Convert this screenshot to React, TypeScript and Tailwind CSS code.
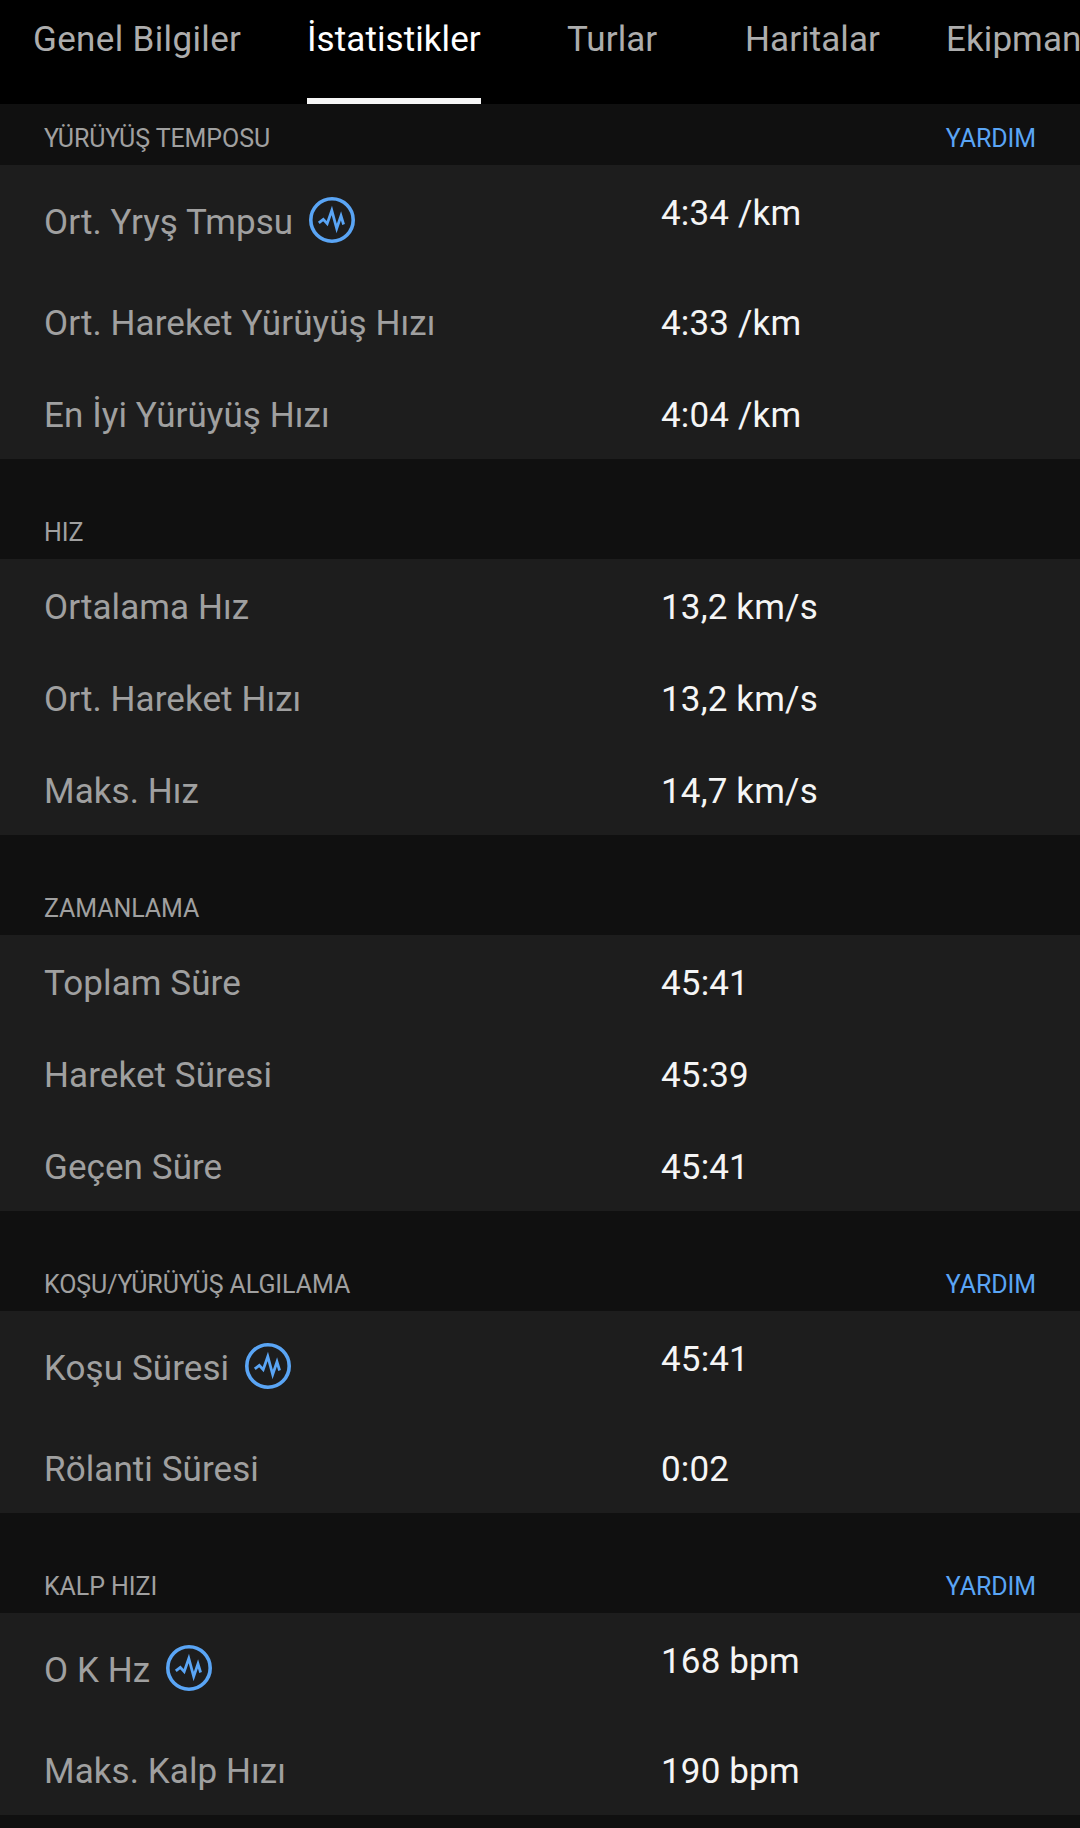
type Row = { label: string; value: string; graph?: boolean };
type Section = { title: string; help?: boolean; rows: Row[] };

const tabs = [
  { label: 'Genel Bilgiler', className: 'w-[208px] ml-[33px] tracking-[0.35px]' },
  { label: 'İstatistikler', className: 'w-[174px] ml-[66px]', active: true },
  { label: 'Turlar', className: 'w-[90px] ml-[86px]' },
  { label: 'Haritalar', className: 'w-[135px] ml-[88px]' },
  { label: 'Ekipman', className: 'ml-[66px]' },
];

const sections: Section[] = [
  {
    title: 'YÜRÜYÜŞ TEMPOSU',
    help: true,
    rows: [
      { label: 'Ort. Yryş Tmpsu', value: '4:34 /km', graph: true },
      { label: 'Ort. Hareket Yürüyüş Hızı', value: '4:33 /km' },
      { label: 'En İyi Yürüyüş Hızı', value: '4:04 /km' },
    ],
  },
  {
    title: 'HIZ',
    rows: [
      { label: 'Ortalama Hız', value: '13,2 km/s' },
      { label: 'Ort. Hareket Hızı', value: '13,2 km/s' },
      { label: 'Maks. Hız', value: '14,7 km/s' },
    ],
  },
  {
    title: 'ZAMANLAMA',
    rows: [
      { label: 'Toplam Süre', value: '45:41' },
      { label: 'Hareket Süresi', value: '45:39' },
      { label: 'Geçen Süre', value: '45:41' },
    ],
  },
  {
    title: 'KOŞU/YÜRÜYÜŞ ALGILAMA',
    help: true,
    rows: [
      { label: 'Koşu Süresi', value: '45:41', graph: true },
      { label: 'Rölanti Süresi', value: '0:02' },
    ],
  },
  {
    title: 'KALP HIZI',
    help: true,
    rows: [
      { label: 'O K Hz', value: '168 bpm', graph: true },
      { label: 'Maks. Kalp Hızı', value: '190 bpm' },
    ],
  },
];

const GraphIcon = () => (
  <svg className="ml-4 h-[46px] w-[46px] shrink-0" viewBox="0 0 46 46" fill="none" stroke="#5aa5f5">
    <circle cx="23" cy="23" r="21.2" strokeWidth="3.6" />
    <path d="M9.8 25.8L14.3 22.3L18.2 26.6L22.8 13.5L27.7 31.5L32 18.8L34.6 27.5" strokeWidth="2.8" />
  </svg>
);

const StatRow = ({ row }: { row: Row }) => (
  <div className={`flex items-start pl-11 ${row.graph ? 'h-[110px]' : 'h-[92px]'}`}>
    <div className={`flex w-[617px] items-center text-[#a0a0a0] ${row.graph ? 'h-[110px]' : 'h-[92px]'}`}>
      <span className="pt-1.5">{row.label}</span>
      {row.graph && <GraphIcon />}
    </div>
    <div className="flex h-[92px] items-center pt-1.5 tracking-[0.15px] text-[#f5f5f5]">{row.value}</div>
  </div>
);

export default function App() {
  return (
    <div className="h-[1828px] w-[1080px] overflow-hidden bg-[#101010] font-['Roboto',sans-serif] text-[35px] leading-10 tracking-[0.08px]">
      <nav className="flex h-26 overflow-hidden bg-black whitespace-nowrap text-[#adadad]">
        {tabs.map((tab) => (
          <div
            key={tab.label}
            className={`h-26 shrink-0 pt-5 ${tab.className} ${tab.active ? 'border-b-6 border-[#f5f5f5] text-white' : ''}`}
          >
            {tab.label}
          </div>
        ))}
      </nav>
      {sections.map((section, i) => (
        <section key={section.title}>
          <header
            className={`flex items-end justify-between px-11 pb-[11px] text-[25px] leading-[30px] tracking-[-0.08px] ${i === 0 ? 'h-[61px]' : 'h-[100px]'}`}
          >
            <h2 className="text-[#a0a0a0]">{section.title}</h2>
            {section.help && <button className="text-[#5aa5f5]">YARDIM</button>}
          </header>
          <div className="bg-[#1d1d1d]">
            {section.rows.map((row) => (
              <StatRow key={row.label} row={row} />
            ))}
          </div>
        </section>
      ))}
    </div>
  );
}
